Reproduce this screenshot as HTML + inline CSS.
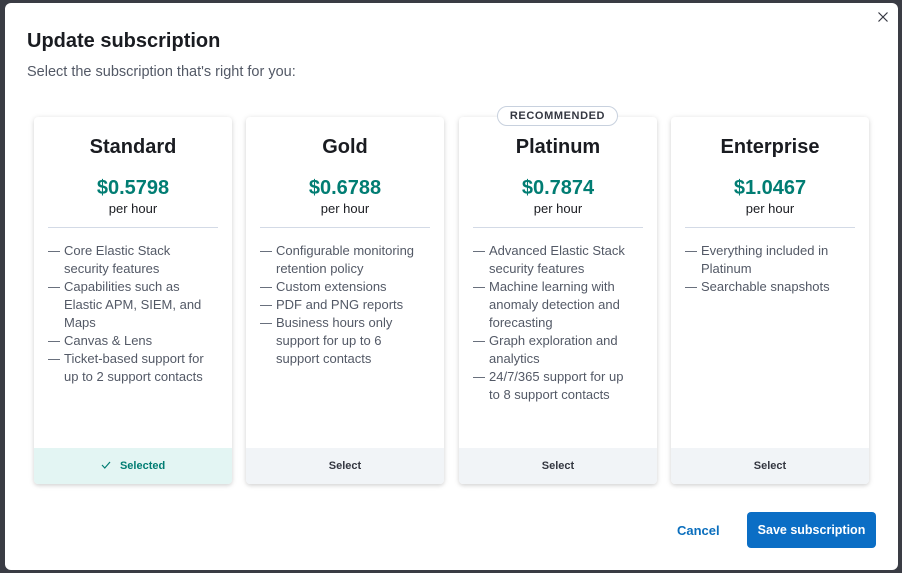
<!DOCTYPE html>
<html><head><style>
*{box-sizing:border-box;margin:0;padding:0}
body{width:902px;height:573px;background:#3a3c44;font-family:"Liberation Sans",sans-serif;position:relative;overflow:hidden}
.modal{position:absolute;left:5px;top:3px;width:893px;height:567px;background:#fff;border-radius:6px}
.close{position:absolute;left:872px;top:8px;width:12px;height:12px}
h1{position:absolute;left:22px;top:27px;font-size:20px;font-weight:bold;color:#1a1c21}
.sub{position:absolute;left:22px;top:61px;font-size:14.5px;color:#535966}
.card{position:absolute;top:114px;width:198px;height:367px;background:#fff;border-radius:4px;box-shadow:0 1px 6px rgba(0,0,0,.14),0 2px 3px rgba(0,0,0,.06)}
.card h2{text-align:center;font-size:20px;font-weight:bold;color:#1a1c21;margin-top:18px;line-height:24px}
.price{text-align:center;font-size:20px;font-weight:bold;color:#017d73;margin-top:17px;line-height:24px}
.ph{text-align:center;font-size:13px;color:#1a1c21;line-height:16px;margin-top:1px}
.hr{margin:10px 14px 0;border-top:1px solid #d3dae6}
ul{list-style:none;margin:14px 14px 0 14px;font-size:13px;line-height:18px;color:#535966}
li{padding-left:16px;position:relative}
li:before{content:"";position:absolute;left:0;top:9px;width:12px;height:1px;background:#69707d}
.foot{position:absolute;left:0;bottom:0;width:100%;height:36px;background:#f1f4f7;border-radius:0 0 4px 4px;text-align:center;font-size:11px;font-weight:bold;color:#343741;line-height:36px}
.sel{background:#e3f5f3;color:#017d73}
.badge{position:absolute;left:492px;top:103px;width:121px;height:20px;border:1px solid #c8d1de;border-radius:10px;background:#fff;font-size:11px;font-weight:bold;letter-spacing:.6px;text-align:center;line-height:18px;color:#343741;z-index:2}
.cancel{position:absolute;left:672px;top:520px;font-size:13px;font-weight:bold;color:#0a6ebd}
.save{position:absolute;left:742px;top:509px;width:129px;height:36px;background:#0b6ec5;border-radius:4px;color:#fff;font-size:12.5px;font-weight:bold;text-align:center;line-height:36px}
</style></head><body>
<div class="modal">
<svg class="close" viewBox="0 0 12 12"><path d="M1.5 1.5L10.5 10.5M10.5 1.5L1.5 10.5" stroke="#343741" stroke-width="1.2"/></svg>
<h1>Update subscription</h1>
<div class="sub">Select the subscription that's right for you:</div>
<div class="card" style="left:29px"><h2>Standard</h2><div class="price">$0.5798</div><div class="ph">per hour</div><div class="hr"></div>
<ul><li>Core Elastic Stack<br>security features</li><li>Capabilities such as<br>Elastic APM, SIEM, and<br>Maps</li><li>Canvas &amp; Lens</li><li>Ticket-based support for<br>up to 2 support contacts</li></ul>
<div class="foot sel"><svg width="10" height="8" viewBox="0 0 10 8"><path d="M1 4L3.8 7L9 1" stroke="#017d73" stroke-width="1.2" fill="none"/></svg>&nbsp;&nbsp; Selected</div></div>
<div class="card" style="left:241px"><h2>Gold</h2><div class="price">$0.6788</div><div class="ph">per hour</div><div class="hr"></div>
<ul><li>Configurable monitoring<br>retention policy</li><li>Custom extensions</li><li>PDF and PNG reports</li><li>Business hours only<br>support for up to 6<br>support contacts</li></ul>
<div class="foot">Select</div></div>
<div class="badge">RECOMMENDED</div>
<div class="card" style="left:454px"><h2>Platinum</h2><div class="price">$0.7874</div><div class="ph">per hour</div><div class="hr"></div>
<ul><li>Advanced Elastic Stack<br>security features</li><li>Machine learning with<br>anomaly detection and<br>forecasting</li><li>Graph exploration and<br>analytics</li><li>24/7/365 support for up<br>to 8 support contacts</li></ul>
<div class="foot">Select</div></div>
<div class="card" style="left:666px"><h2>Enterprise</h2><div class="price">$1.0467</div><div class="ph">per hour</div><div class="hr"></div>
<ul><li>Everything included in<br>Platinum</li><li>Searchable snapshots</li></ul>
<div class="foot">Select</div></div>
<div class="cancel">Cancel</div>
<div class="save">Save subscription</div>
</div>
</body></html>
